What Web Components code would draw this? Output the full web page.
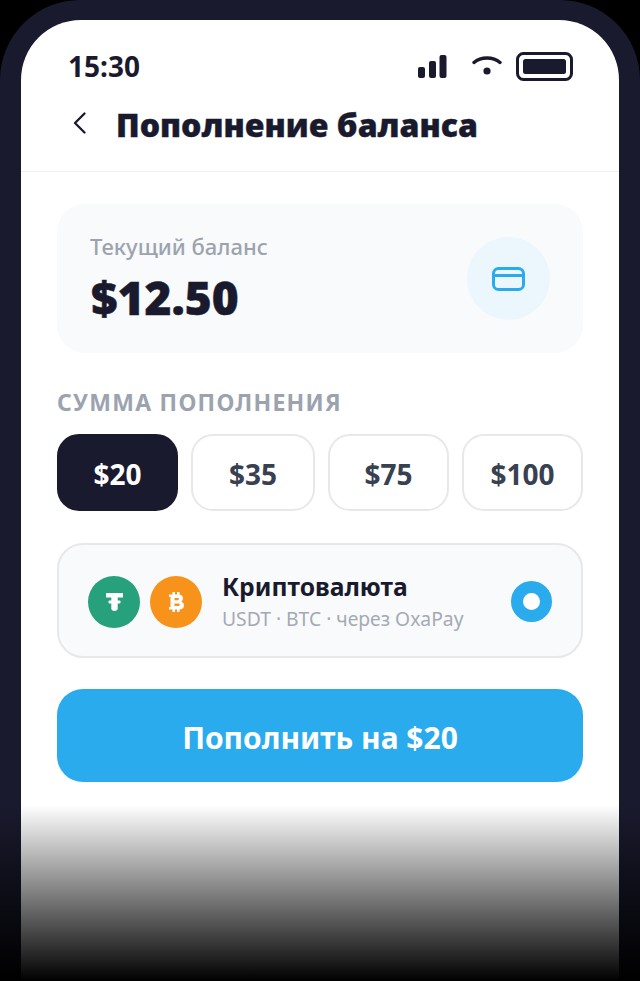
<!DOCTYPE html>
<html lang="ru">
<head>
<meta charset="utf-8">
<title>Пополнение баланса</title>
<style>
  html, body { margin: 0; padding: 0; height: 981px; overflow: hidden; background: #000; }
  body { font-family: "Noto Sans", "Open Sans", sans-serif; color: #1a1a2e; }
</style>
</head>
<body>
<phone-frame>
  <status-bar time="15:30"></status-bar>
  <page-header>Пополнение баланса</page-header>
  <main-content>
    <balance-card label="Текущий баланс" amount="$12.50"></balance-card>
    <section-label>Сумма пополнения</section-label>
    <amount-row>
      <amount-chip selected grow="121">$20</amount-chip>
      <amount-chip grow="124">$35</amount-chip>
      <amount-chip grow="121">$75</amount-chip>
      <amount-chip grow="121">$100</amount-chip>
    </amount-row>
    <pay-method title="Криптовалюта" note="USDT · BTC · через OxaPay"></pay-method>
    <pay-button>Пополнить на $20</pay-button>
  </main-content>
</phone-frame>

<script>
class PhoneFrame extends HTMLElement {
  constructor() {
    super();
    this.attachShadow({ mode: 'open' });
    this.shadowRoot.innerHTML = `
      <style>
        :host {
          display: block;
          position: relative;
          height: 981px;
          box-sizing: border-box;
          padding: 20px 21px 0;
          background: #1a1a2e;
          border-radius: 80px 80px 0 0;
          overflow: hidden;
        }
        .screen {
          height: 100%;
          background: #fff;
          border-radius: 60px 60px 0 0;
        }
        .fade {
          position: absolute;
          left: 0;
          right: 0;
          bottom: 0;
          height: 176px;
          background: linear-gradient(to bottom, rgba(0,0,0,0), #000);
        }
      </style>
      <div class="screen"><slot></slot></div>
      <div class="fade"></div>
    `;
  }
}
customElements.define('phone-frame', PhoneFrame);

class StatusBar extends HTMLElement {
  constructor() {
    super();
    this.attachShadow({ mode: 'open' });
    this.shadowRoot.innerHTML = `
      <style>
        :host {
          display: flex;
          align-items: center;
          justify-content: space-between;
          height: 38px;
          padding: 27px 46px 0 47px;
        }
        .time { font-size: 28px; font-weight: 700; line-height: 38px; color: #1a1a2e; }
        .icons { display: flex; align-items: center; }
        .signal { margin-right: 25px; }
        .wifi { margin-right: 14px; }
        svg { display: block; }
      </style>
      <span class="time"></span>
      <span class="icons">
        <svg class="signal" width="29" height="24" viewBox="0 0 29 24" fill="#1a1a2e">
          <rect x="0" y="13" width="7" height="11" rx="2"/>
          <rect x="11" y="7" width="7" height="17" rx="2"/>
          <rect x="21.500" y="1" width="7" height="23" rx="2"/>
        </svg>
        <svg class="wifi" width="30" height="24" viewBox="0 0 30 24" fill="none">
          <path d="M2 8.500 C9 2.500 21 2.500 28 8.500" stroke="#1a1a2e" stroke-width="3.400" stroke-linecap="round"/>
          <circle cx="15" cy="17" r="3.600" fill="#1a1a2e"/>
        </svg>
        <svg width="57" height="29" viewBox="0 0 57 29" fill="none">
          <rect x="1.500" y="1.500" width="54" height="26" rx="6" stroke="#1a1a2e" stroke-width="3"/>
          <rect x="7" y="7" width="43" height="15" rx="2.500" fill="#1a1a2e"/>
        </svg>
      </span>
    `;
    this.shadowRoot.querySelector('.time').textContent = this.getAttribute('time') || '';
  }
}
customElements.define('status-bar', StatusBar);

class PageHeader extends HTMLElement {
  constructor() {
    super();
    this.attachShadow({ mode: 'open' });
    this.shadowRoot.innerHTML = `
      <style>
        :host {
          display: flex;
          align-items: center;
          gap: 30px;
          height: 87px;
          box-sizing: border-box;
          padding: 0 0 6px 52px;
          border-bottom: 1px solid #f0f0f2;
        }
        svg { display: block; flex: none; margin-bottom: 4px; }
        h1 {
          margin: 0;
          font-family: "Open Sans", "Noto Sans", sans-serif;
          font-size: 32px;
          font-weight: 800;
          line-height: 44px;
          color: #1a1a2e;
          white-space: nowrap;
          -webkit-text-stroke: 0.4px #1a1a2e;
        }
      </style>
      <svg width="13" height="22" viewBox="0 0 13 22" fill="none">
        <path d="M11.500 1.500 L2 11 L11.500 20.500" stroke="#1a1a2e" stroke-width="2.300" stroke-linecap="round" stroke-linejoin="round"/>
      </svg>
      <h1><slot></slot></h1>
    `;
  }
}
customElements.define('page-header', PageHeader);

class MainContent extends HTMLElement {
  constructor() {
    super();
    this.attachShadow({ mode: 'open' });
    this.shadowRoot.innerHTML = `
      <style>
        :host {
          display: flex;
          flex-direction: column;
          padding: 32px 36px 0;
        }
      </style>
      <slot></slot>
    `;
  }
}
customElements.define('main-content', MainContent);

class BalanceCard extends HTMLElement {
  constructor() {
    super();
    this.attachShadow({ mode: 'open' });
    this.shadowRoot.innerHTML = `
      <style>
        :host {
          display: flex;
          align-items: center;
          justify-content: space-between;
          height: 149px;
          box-sizing: border-box;
          padding: 0 33px;
          background: #f9fafb;
          border-radius: 28px;
        }
        .label { font-size: 22px; font-weight: 500; line-height: 30px; color: #9ca3af; }
        .amount {
          font-family: "Open Sans", "Noto Sans", sans-serif;
          font-size: 46px;
          font-weight: 800;
          line-height: 60px;
          color: #1a1a2e;
          margin-top: 6px;
          margin-left: 1px;
          -webkit-text-stroke: 0.5px #1a1a2e;
        }
        .icon {
          width: 83px;
          height: 83px;
          border-radius: 50%;
          background: #ebf6fd;
          display: flex;
          align-items: center;
          justify-content: center;
        }
        svg { display: block; }
      </style>
      <div>
        <div class="label"></div>
        <div class="amount"></div>
      </div>
      <div class="icon">
        <svg width="33" height="24" viewBox="0 0 33 24" fill="none" stroke="#2aabee" stroke-width="3">
          <rect x="1.500" y="1.500" width="30" height="21" rx="5"/>
          <path d="M1.500 8.500 H31.500"/>
        </svg>
      </div>
    `;
    this.shadowRoot.querySelector('.label').textContent = this.getAttribute('label') || '';
    this.shadowRoot.querySelector('.amount').textContent = this.getAttribute('amount') || '';
  }
}
customElements.define('balance-card', BalanceCard);

class SectionLabel extends HTMLElement {
  constructor() {
    super();
    this.attachShadow({ mode: 'open' });
    this.shadowRoot.innerHTML = `
      <style>
        :host {
          display: block;
          margin-top: 34px;
          font-size: 23px;
          font-weight: 700;
          line-height: 30px;
          letter-spacing: 1.280px;
          text-transform: uppercase;
          color: #9ca3af;
        }
      </style>
      <slot></slot>
    `;
  }
}
customElements.define('section-label', SectionLabel);

class AmountRow extends HTMLElement {
  constructor() {
    super();
    this.attachShadow({ mode: 'open' });
    this.shadowRoot.innerHTML = `
      <style>
        :host { display: flex; gap: 13px; margin-top: 17px; }
      </style>
      <slot></slot>
    `;
  }
}
customElements.define('amount-row', AmountRow);

class AmountChip extends HTMLElement {
  constructor() {
    super();
    this.attachShadow({ mode: 'open' });
    this.shadowRoot.innerHTML = `
      <style>
        :host {
          display: flex;
          align-items: center;
          justify-content: center;
          box-sizing: border-box;
          height: 77px;
          flex: 1 1 0;
          min-width: 0;
          padding-top: 2px;
          border: 2.500px solid #e8e8ea;
          border-radius: 22px;
          background: #fff;
          font-size: 28px;
          font-weight: 700;
          color: #374151;
        }
        :host([selected]) {
          background: #1a1a2e;
          border-color: #1a1a2e;
          color: #fff;
        }
      </style>
      <slot></slot>
    `;
    this.style.flexGrow = this.getAttribute('grow') || 1;
  }
}
customElements.define('amount-chip', AmountChip);

class PayMethod extends HTMLElement {
  constructor() {
    super();
    this.attachShadow({ mode: 'open' });
    this.shadowRoot.innerHTML = `
      <style>
        :host {
          display: flex;
          align-items: center;
          height: 115px;
          box-sizing: border-box;
          margin-top: 32px;
          padding: 2px 29px 0 29px;
          background: #f9fafb;
          border: 2.500px solid #e8e8ea;
          border-radius: 26px;
        }
        .coin {
          flex: none;
          width: 52px;
          height: 52px;
          border-radius: 50%;
          display: flex;
          align-items: center;
          justify-content: center;
        }
        .usdt { background: #26a17b; }
        .btc { background: #f7931a; margin-left: 10px; }
        .text { flex: 1; margin-left: 20px; min-width: 0; }
        .title { font-size: 24.700px; font-weight: 700; line-height: 31px; color: #1a1a2e; }
        .note { font-size: 19.300px; line-height: 27px; margin-top: 3px; color: #a4aab4; white-space: nowrap; }
        .radio {
          flex: none;
          width: 41px;
          height: 41px;
          box-sizing: border-box;
          border: 12px solid #2aabee;
          border-radius: 50%;
          background: #fff;
        }
        svg { display: block; }
      </style>
      <span class="coin usdt">
        <svg width="17" height="18" viewBox="0 0 17 18" fill="#fff">
          <rect x="0" y="0" width="17" height="4.500" rx="0.500"/>
          <rect x="2.500" y="7.500" width="12" height="3" rx="1"/>
          <path d="M5.300 3 H11.700 V15.500 C11.700 17 10.500 18 8.500 18 C6.500 18 5.300 17 5.300 15.500 Z"/>
        </svg>
      </span>
      <span class="coin btc">
        <svg width="15" height="20" viewBox="0 0 15 20" fill="#fff">
          <rect x="3.500" y="0" width="2.500" height="3.500"/>
          <rect x="8" y="0" width="2.500" height="3.500"/>
          <rect x="3.500" y="16.500" width="2.500" height="3.500"/>
          <rect x="8" y="16.500" width="2.500" height="3.500"/>
          <path fill-rule="evenodd" d="M0 2.500 H9.500 C12.500 2.500 14 4.200 14 6.300 C14 7.800 13.300 8.900 12.200 9.600 C13.800 10.300 15 11.600 15 13.500 C15 15.900 13 17.500 10 17.500 H0 V15 H1.500 V5 H0 Z M5.500 6 V8.300 H8.500 C9.500 8.300 10 7.900 10 7.100 S9.500 6 8.500 6 Z M5.500 11.500 V14 H9 C10.200 14 10.800 13.600 10.800 12.700 S10.200 11.500 9 11.500 Z"/>
        </svg>
      </span>
      <div class="text">
        <div class="title"></div>
        <div class="note"></div>
      </div>
      <span class="radio"></span>
    `;
    this.shadowRoot.querySelector('.title').textContent = this.getAttribute('title') || '';
    this.shadowRoot.querySelector('.note').textContent = this.getAttribute('note') || '';
  }
}
customElements.define('pay-method', PayMethod);

class PayButton extends HTMLElement {
  constructor() {
    super();
    this.attachShadow({ mode: 'open' });
    this.shadowRoot.innerHTML = `
      <style>
        :host {
          display: flex;
          align-items: center;
          justify-content: center;
          height: 93px;
          box-sizing: border-box;
          padding-top: 3px;
          margin-top: 31px;
          background: #2aabee;
          border-radius: 26px;
          font-size: 30px;
          font-weight: 700;
          color: #fff;
        }
      </style>
      <slot></slot>
    `;
  }
}
customElements.define('pay-button', PayButton);
</script>
</body>
</html>
